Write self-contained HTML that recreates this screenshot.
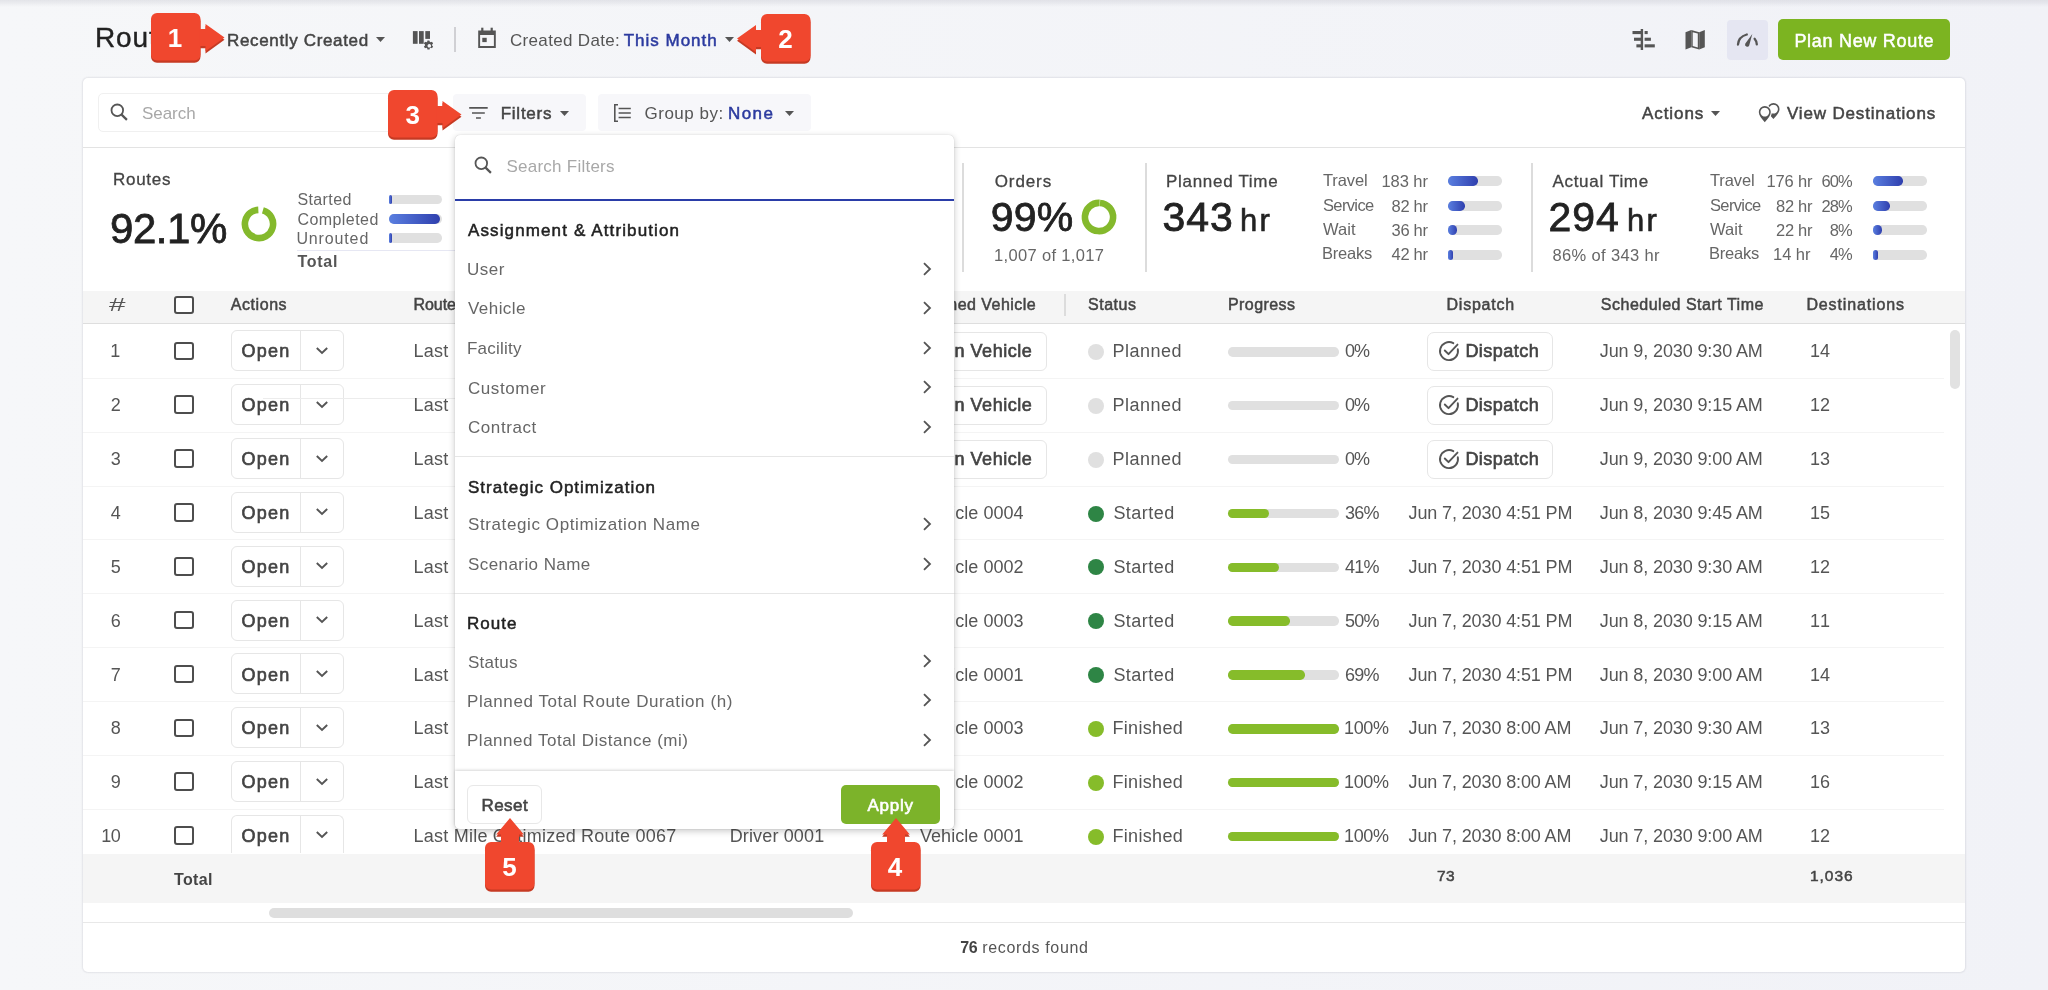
<!DOCTYPE html><html lang="en"><head><meta charset="utf-8"><title>Routes</title><style>
*{box-sizing:border-box;margin:0;padding:0}
html,body{width:2048px;height:990px;overflow:hidden}
body{position:relative;background:linear-gradient(90deg,#f6f7f9,#f1f2f7);font-family:"Liberation Sans", sans-serif;}
div,span.t,svg{position:absolute}
.t{white-space:pre;line-height:1}
.L{position:absolute;left:0;top:0;width:2048px;height:990px;will-change:transform}
</style></head><body>
<div class="L">
<div style="left:0px;top:0px;width:2048px;height:7px;background:linear-gradient(rgba(40,40,70,.09),rgba(40,40,70,0));"></div>
<svg style="left:376.2px;top:36.7px" width="9" height="5" viewBox="0 0 9 5"><path d="M0 0H9L4.5 5Z" fill="#555"/></svg>
<svg style="left:410px;top:28px" width="28" height="26" viewBox="0 0 28 26"><g fill="#555">
<rect x="2.9" y="3.1" width="4.7" height="12.7"/><rect x="9" y="3.1" width="4.7" height="12.7"/><rect x="15.3" y="3.1" width="4.7" height="7.8"/>
<path d="M19.3 12.5l.5 1.3c.3.1.6.2.9.4l1.3-.5 1.1 1.9-1 .9c0 .3 0 .7 0 1l1 .9-1.1 1.9-1.3-.5c-.3.2-.6.3-.9.4l-.2 1.4h-2.200l-.2-1.400c-.3-.1-.6-.2-.9-.4l-1.300.5-1.100-1.900 1.100-.9c0-.3 0-.7 0-1l-1.100-.9 1.100-1.900 1.300.5c.3-.2.600-.300.900-.400l.2-1.300zM19.300 16a1.800 1.800 0 1 0 .01 0z" fill-rule="evenodd"/>
</g></svg>
<div style="left:454px;top:27px;width:2px;height:25px;background:#d0d0d4;"></div>
<svg style="left:476px;top:26px" width="22" height="24" viewBox="0 0 22 24"><g fill="#555">
<path d="M2.200 4.500h17.600v17.500h-17.600zM4.100 9.100v11h13.800v-11z" fill-rule="evenodd"/>
<rect x="5.200" y="1.700" width="2.200" height="4"/><rect x="14.600" y="1.700" width="2.200" height="4"/>
<rect x="6.300" y="11.800" width="4.400" height="4.300"/></g></svg>
<svg style="left:724.5px;top:36.7px" width="9" height="5" viewBox="0 0 9 5"><path d="M0 0H9L4.5 5Z" fill="#555"/></svg>
<svg style="left:1630px;top:27px" width="28" height="26" viewBox="0 0 28 26"><g fill="#555">
<rect x="10.700" y="2" width="2.400" height="21"/>
<rect x="2.500" y="4" width="8.500" height="3.100"/><rect x="14.600" y="4" width="3.100" height="3.100"/>
<rect x="4" y="10.700" width="7" height="3.100"/><rect x="14.600" y="10.700" width="6.300" height="3.100"/>
<rect x="6.400" y="17.300" width="4.600" height="3.100"/><rect x="14.600" y="17.300" width="10.200" height="3.100"/></g></svg>
<svg style="left:1684px;top:28px" width="22" height="24" viewBox="0 0 22 24"><g fill="#555">
<path d="M1.500 4.200L7.300 2v17.200l-5.800 2.200z"/><path d="M15.200 4.200l5.600-2.200v17.200l-5.600 2.200z"/>
<path d="M7.300 2l7.900 2.200v17.200l-7.900-2.200zM8.700 4.200v13.900l5.100 1.400V5.600z" fill-rule="evenodd"/></g></svg>
<div style="left:1727.4px;top:19.5px;width:40.5px;height:40.7px;background:#e5e6f2;border-radius:4px;"></div>
<svg style="left:1734px;top:30px" width="28" height="20" viewBox="0 0 28 20"><g fill="none" stroke="#555" stroke-width="2.300" stroke-linecap="round">
<path d="M4 14.500c.3-4.500 3.500-8.500 8.800-10"/><path d="M20.600 8.800c1.300 1.500 2 3.400 2.200 5.500"/></g>
<path d="M18.300 4L15.200 15.400A2.100 2.100 0 0 1 11.200 13.800Z" fill="#555"/></svg>
<div style="left:1778.3px;top:19.3px;width:171.7px;height:41px;background:#7cb421;border-radius:5px;"></div>
<div style="left:83.2px;top:78.3px;width:1881.5px;height:893.7px;background:#fff;border-radius:5px;box-shadow:0 0 1.500px 1px rgba(30,30,60,.085);"></div>
<div style="left:97.8px;top:93px;width:332px;height:39.3px;border:1px solid #f0f0f0;border-radius:5px;background:#fff;"></div>
<svg style="left:109.4px;top:102.2px" width="20.0" height="20.0" viewBox="0 0 20 20"><circle cx="8.300" cy="8.300" r="5.800" fill="none" stroke="#555" stroke-width="1.800"/><path d="M12.600 12.600l5.300 5.300" stroke="#555" stroke-width="2.200" stroke-linecap="butt"/></svg>
<div style="left:453px;top:94.4px;width:133px;height:36.8px;background:#f7f7fa;border-radius:4px;"></div>
<div style="left:597.5px;top:94.4px;width:213.5px;height:36.8px;background:#f7f7fa;border-radius:4px;"></div>
<svg style="left:467px;top:104px" width="24" height="18" viewBox="0 0 24 18"><g stroke="#555" stroke-width="1.700" fill="none">
<path d="M2.200 3.800h18.500M5 9h12.800M9 14h4.900"/></g></svg>
<svg style="left:559.7px;top:111.0px" width="9" height="5" viewBox="0 0 9 5"><path d="M0 0H9L4.5 5Z" fill="#555"/></svg>
<svg style="left:612px;top:102px" width="22" height="22" viewBox="0 0 22 22"><g stroke="#555" stroke-width="1.600" fill="none">
<path d="M6 2.800H2.800v16.400H6"/><path d="M6.600 6.500h12.200M6.600 11h12.200M6.600 15.500h12.200"/></g></svg>
<svg style="left:785.0px;top:111.0px" width="9" height="5" viewBox="0 0 9 5"><path d="M0 0H9L4.5 5Z" fill="#555"/></svg>
<svg style="left:1710.8px;top:111.0px" width="9" height="5" viewBox="0 0 9 5"><path d="M0 0H9L4.5 5Z" fill="#555"/></svg>
<svg style="left:1757px;top:101px" width="24" height="24" viewBox="0 0 24 24"><defs><mask id="pm"><rect width="24" height="24" fill="#fff"/><path d="M7.800 21.200C4.500 17.500 1.800 14.600 1.800 11a6 6 0 0 1 12 0c0 3.600-2.700 6.500-6 10.200z" fill="#000" stroke="#000" stroke-width="2.400"/></mask></defs>
<g fill="#555" fill-rule="evenodd"><path d="M7.800 21.200C4.500 17.500 1.800 14.600 1.800 11a6 6 0 0 1 12 0c0 3.600-2.700 6.500-6 10.200zM7.800 6.700a4.400 4.400 0 1 0 .01 0z"/>
<path mask="url(#pm)" d="M16.400 18C13.200 14.400 10.500 11.500 10.500 8a6 6 0 0 1 12 0c0 3.500-2.800 6.400-6.100 10zM16.500 3.700a4.400 4.400 0 1 0 .01 0z"/></g></svg>
<div style="left:83px;top:147px;width:1882px;height:1px;background:#e3e3e3;"></div>
<svg style="left:241.3px;top:206.3px" width="36" height="36" viewBox="0 0 36 36"><circle cx="18" cy="18" r="14.1" fill="none" stroke="#84b92c" stroke-width="6.600" stroke-dasharray="83.42 88.59" transform="rotate(-74 18 18)"/></svg>
<div style="left:388.8px;top:194.55px;width:53.5px;height:9.5px;background:#e0e0e0;border-radius:4.75px;"></div>
<div style="left:388.8px;top:194.55px;width:3px;height:9.5px;background:linear-gradient(90deg,#5a7fe0,#2f3fae);border-radius:1.5px;"></div>
<div style="left:388.8px;top:214.1px;width:53.5px;height:9.8px;background:#e0e0e0;border-radius:4.9px;"></div>
<div style="left:388.8px;top:214.1px;width:51.5px;height:9.8px;background:linear-gradient(90deg,#5a7fe0,#2f3fae);border-radius:4.9px;"></div>
<div style="left:388.8px;top:233.15px;width:53.5px;height:9.5px;background:#e0e0e0;border-radius:4.75px;"></div>
<div style="left:388.8px;top:233.15px;width:3px;height:9.5px;background:linear-gradient(90deg,#5a7fe0,#2f3fae);border-radius:1.5px;"></div>
<div style="left:297px;top:250.3px;width:170px;height:1px;background:#e6e7f3;"></div>
<div style="left:962.25px;top:163px;width:1.5px;height:109px;background:#dcdcdc;"></div>
<div style="left:1145.25px;top:163px;width:1.5px;height:109px;background:#dcdcdc;"></div>
<div style="left:1531.25px;top:163px;width:1.5px;height:109px;background:#dcdcdc;"></div>
<svg style="left:1081.2px;top:199px" width="36" height="36" viewBox="0 0 36 36"><circle cx="18" cy="18" r="14.1" fill="none" stroke="#84b92c" stroke-width="6.600" stroke-dasharray="87.61 88.59" transform="rotate(-86 18 18)"/></svg>
<div style="left:1447.9px;top:176.25px;width:53.7px;height:9.5px;background:#e0e0e0;border-radius:4.75px;"></div>
<div style="left:1447.9px;top:176.25px;width:30px;height:9.5px;background:linear-gradient(90deg,#5a7fe0,#2f3fae);border-radius:4.75px;"></div>
<div style="left:1447.9px;top:201.25px;width:53.7px;height:9.5px;background:#e0e0e0;border-radius:4.75px;"></div>
<div style="left:1447.9px;top:201.25px;width:17px;height:9.5px;background:linear-gradient(90deg,#5a7fe0,#2f3fae);border-radius:4.75px;"></div>
<div style="left:1447.9px;top:225.25px;width:53.7px;height:9.5px;background:#e0e0e0;border-radius:4.75px;"></div>
<div style="left:1447.9px;top:225.25px;width:9px;height:9.5px;background:linear-gradient(90deg,#5a7fe0,#2f3fae);border-radius:4.5px;"></div>
<div style="left:1447.9px;top:250.25px;width:53.7px;height:9.5px;background:#e0e0e0;border-radius:4.75px;"></div>
<div style="left:1447.9px;top:250.25px;width:5px;height:9.5px;background:linear-gradient(90deg,#5a7fe0,#2f3fae);border-radius:2.5px;"></div>
<div style="left:1872.8px;top:176.25px;width:54px;height:9.5px;background:#e0e0e0;border-radius:4.75px;"></div>
<div style="left:1872.8px;top:176.25px;width:30px;height:9.5px;background:linear-gradient(90deg,#5a7fe0,#2f3fae);border-radius:4.75px;"></div>
<div style="left:1872.8px;top:201.25px;width:54px;height:9.5px;background:#e0e0e0;border-radius:4.75px;"></div>
<div style="left:1872.8px;top:201.25px;width:17px;height:9.5px;background:linear-gradient(90deg,#5a7fe0,#2f3fae);border-radius:4.75px;"></div>
<div style="left:1872.8px;top:225.25px;width:54px;height:9.5px;background:#e0e0e0;border-radius:4.75px;"></div>
<div style="left:1872.8px;top:225.25px;width:9px;height:9.5px;background:linear-gradient(90deg,#5a7fe0,#2f3fae);border-radius:4.5px;"></div>
<div style="left:1872.8px;top:250.25px;width:54px;height:9.5px;background:#e0e0e0;border-radius:4.75px;"></div>
<div style="left:1872.8px;top:250.25px;width:5.5px;height:9.5px;background:linear-gradient(90deg,#5a7fe0,#2f3fae);border-radius:2.75px;"></div>
<div style="left:83px;top:290.5px;width:1882px;height:32.5px;background:#f5f5f5;"></div>
<div style="left:83px;top:323px;width:1882px;height:1px;background:#dedede;"></div>
<div style="left:173.8px;top:295.6px;width:20px;height:18.5px;border:2px solid #4d4d4d;border-radius:3px;background:#fff;"></div>
<div style="left:1064px;top:294px;width:2px;height:21.5px;background:#dcdcdc;"></div>
<div style="left:173.8px;top:341.6px;width:20px;height:18.5px;border:2px solid #4d4d4d;border-radius:3px;background:#fff;"></div>
<div style="left:230.8px;top:330.3px;width:113px;height:41px;border:1px solid #e6e6e6;border-radius:6px;background:#fff;"><div style="left:68.500px;top:0;width:1px;height:100%;background:#e6e6e6;"></div></div>
<svg style="left:314.700px;top:345.80px" width="14" height="10" viewBox="0 0 14 10"><path d="M1.800 2l5.200 5 5.200-5" fill="none" stroke="#555" stroke-width="1.900"/></svg>
<div style="left:891px;top:332.4px;width:155.6px;height:38.8px;border:1px solid #e6e6e6;border-radius:6px;background:#fff;"></div>
<div style="left:1087.8px;top:344.0px;width:16px;height:16px;background:#e0e0e0;border-radius:50%;"></div>
<div style="left:1228.2px;top:347.1px;width:110.6px;height:9.5px;background:#e0e0e0;border-radius:4.750px;"></div>
<div style="left:1427.3px;top:332.4px;width:125.8px;height:38.8px;border:1px solid #e6e6e6;border-radius:7px;background:#fff;"></div>
<svg style="left:1437.800px;top:340.0px" width="22" height="22" viewBox="0 0 22 22"><g fill="none" stroke="#555" stroke-width="1.900" stroke-linecap="round" stroke-linejoin="round"><path d="M19.800 9.200a9 9 0 1 1-4.500-6"/><path d="M6.800 10.500l3.700 3.700 9-9.600"/></g></svg>
<div style="left:83px;top:377.85px;width:1861px;height:1px;background:#f4f4f4;"></div>
<div style="left:173.8px;top:395.45000000000005px;width:20px;height:18.5px;border:2px solid #4d4d4d;border-radius:3px;background:#fff;"></div>
<div style="left:230.8px;top:384.15000000000003px;width:113px;height:41px;border:1px solid #e6e6e6;border-radius:6px;background:#fff;"><div style="left:68.500px;top:0;width:1px;height:100%;background:#e6e6e6;"></div></div>
<svg style="left:314.700px;top:399.65px" width="14" height="10" viewBox="0 0 14 10"><path d="M1.800 2l5.200 5 5.200-5" fill="none" stroke="#555" stroke-width="1.900"/></svg>
<div style="left:891px;top:386.25px;width:155.6px;height:38.8px;border:1px solid #e6e6e6;border-radius:6px;background:#fff;"></div>
<div style="left:1087.8px;top:397.85px;width:16px;height:16px;background:#e0e0e0;border-radius:50%;"></div>
<div style="left:1228.2px;top:400.95000000000005px;width:110.6px;height:9.5px;background:#e0e0e0;border-radius:4.750px;"></div>
<div style="left:1427.3px;top:386.25px;width:125.8px;height:38.8px;border:1px solid #e6e6e6;border-radius:7px;background:#fff;"></div>
<svg style="left:1437.800px;top:393.85px" width="22" height="22" viewBox="0 0 22 22"><g fill="none" stroke="#555" stroke-width="1.900" stroke-linecap="round" stroke-linejoin="round"><path d="M19.800 9.200a9 9 0 1 1-4.500-6"/><path d="M6.800 10.500l3.700 3.700 9-9.600"/></g></svg>
<div style="left:83px;top:431.7px;width:1861px;height:1px;background:#f4f4f4;"></div>
<div style="left:173.8px;top:449.3px;width:20px;height:18.5px;border:2px solid #4d4d4d;border-radius:3px;background:#fff;"></div>
<div style="left:230.8px;top:438.0px;width:113px;height:41px;border:1px solid #e6e6e6;border-radius:6px;background:#fff;"><div style="left:68.500px;top:0;width:1px;height:100%;background:#e6e6e6;"></div></div>
<svg style="left:314.700px;top:453.50px" width="14" height="10" viewBox="0 0 14 10"><path d="M1.800 2l5.200 5 5.200-5" fill="none" stroke="#555" stroke-width="1.900"/></svg>
<div style="left:891px;top:440.09999999999997px;width:155.6px;height:38.8px;border:1px solid #e6e6e6;border-radius:6px;background:#fff;"></div>
<div style="left:1087.8px;top:451.7px;width:16px;height:16px;background:#e0e0e0;border-radius:50%;"></div>
<div style="left:1228.2px;top:454.8px;width:110.6px;height:9.5px;background:#e0e0e0;border-radius:4.750px;"></div>
<div style="left:1427.3px;top:440.09999999999997px;width:125.8px;height:38.8px;border:1px solid #e6e6e6;border-radius:7px;background:#fff;"></div>
<svg style="left:1437.800px;top:447.7px" width="22" height="22" viewBox="0 0 22 22"><g fill="none" stroke="#555" stroke-width="1.900" stroke-linecap="round" stroke-linejoin="round"><path d="M19.800 9.200a9 9 0 1 1-4.500-6"/><path d="M6.800 10.500l3.700 3.700 9-9.600"/></g></svg>
<div style="left:83px;top:485.55px;width:1861px;height:1px;background:#f4f4f4;"></div>
<div style="left:173.8px;top:503.15000000000003px;width:20px;height:18.5px;border:2px solid #4d4d4d;border-radius:3px;background:#fff;"></div>
<div style="left:230.8px;top:491.85px;width:113px;height:41px;border:1px solid #e6e6e6;border-radius:6px;background:#fff;"><div style="left:68.500px;top:0;width:1px;height:100%;background:#e6e6e6;"></div></div>
<svg style="left:314.700px;top:507.35px" width="14" height="10" viewBox="0 0 14 10"><path d="M1.800 2l5.200 5 5.200-5" fill="none" stroke="#555" stroke-width="1.900"/></svg>
<div style="left:1087.8px;top:505.55px;width:16px;height:16px;background:#2e8545;border-radius:50%;"></div>
<div style="left:1228.2px;top:508.65000000000003px;width:110.6px;height:9.5px;background:#e0e0e0;border-radius:4.750px;"></div>
<div style="left:1228.2px;top:508.65000000000003px;width:40.4px;height:9.5px;background:#86bc2a;border-radius:4.750px;"></div>
<div style="left:83px;top:539.4px;width:1861px;height:1px;background:#f4f4f4;"></div>
<div style="left:173.8px;top:557.0px;width:20px;height:18.5px;border:2px solid #4d4d4d;border-radius:3px;background:#fff;"></div>
<div style="left:230.8px;top:545.7px;width:113px;height:41px;border:1px solid #e6e6e6;border-radius:6px;background:#fff;"><div style="left:68.500px;top:0;width:1px;height:100%;background:#e6e6e6;"></div></div>
<svg style="left:314.700px;top:561.20px" width="14" height="10" viewBox="0 0 14 10"><path d="M1.800 2l5.200 5 5.200-5" fill="none" stroke="#555" stroke-width="1.900"/></svg>
<div style="left:1087.8px;top:559.4px;width:16px;height:16px;background:#2e8545;border-radius:50%;"></div>
<div style="left:1228.2px;top:562.5px;width:110.6px;height:9.5px;background:#e0e0e0;border-radius:4.750px;"></div>
<div style="left:1228.2px;top:562.5px;width:50.5px;height:9.5px;background:#86bc2a;border-radius:4.750px;"></div>
<div style="left:83px;top:593.25px;width:1861px;height:1px;background:#f4f4f4;"></div>
<div style="left:173.8px;top:610.85px;width:20px;height:18.5px;border:2px solid #4d4d4d;border-radius:3px;background:#fff;"></div>
<div style="left:230.8px;top:599.55px;width:113px;height:41px;border:1px solid #e6e6e6;border-radius:6px;background:#fff;"><div style="left:68.500px;top:0;width:1px;height:100%;background:#e6e6e6;"></div></div>
<svg style="left:314.700px;top:615.05px" width="14" height="10" viewBox="0 0 14 10"><path d="M1.800 2l5.200 5 5.200-5" fill="none" stroke="#555" stroke-width="1.900"/></svg>
<div style="left:1087.8px;top:613.25px;width:16px;height:16px;background:#2e8545;border-radius:50%;"></div>
<div style="left:1228.2px;top:616.35px;width:110.6px;height:9.5px;background:#e0e0e0;border-radius:4.750px;"></div>
<div style="left:1228.2px;top:616.35px;width:61.6px;height:9.5px;background:#86bc2a;border-radius:4.750px;"></div>
<div style="left:83px;top:647.1px;width:1861px;height:1px;background:#f4f4f4;"></div>
<div style="left:173.8px;top:664.7px;width:20px;height:18.5px;border:2px solid #4d4d4d;border-radius:3px;background:#fff;"></div>
<div style="left:230.8px;top:653.4000000000001px;width:113px;height:41px;border:1px solid #e6e6e6;border-radius:6px;background:#fff;"><div style="left:68.500px;top:0;width:1px;height:100%;background:#e6e6e6;"></div></div>
<svg style="left:314.700px;top:668.90px" width="14" height="10" viewBox="0 0 14 10"><path d="M1.800 2l5.200 5 5.200-5" fill="none" stroke="#555" stroke-width="1.900"/></svg>
<div style="left:1087.8px;top:667.1px;width:16px;height:16px;background:#2e8545;border-radius:50%;"></div>
<div style="left:1228.2px;top:670.2px;width:110.6px;height:9.5px;background:#e0e0e0;border-radius:4.750px;"></div>
<div style="left:1228.2px;top:670.2px;width:77.2px;height:9.5px;background:#86bc2a;border-radius:4.750px;"></div>
<div style="left:83px;top:700.95px;width:1861px;height:1px;background:#f4f4f4;"></div>
<div style="left:173.8px;top:718.55px;width:20px;height:18.5px;border:2px solid #4d4d4d;border-radius:3px;background:#fff;"></div>
<div style="left:230.8px;top:707.25px;width:113px;height:41px;border:1px solid #e6e6e6;border-radius:6px;background:#fff;"><div style="left:68.500px;top:0;width:1px;height:100%;background:#e6e6e6;"></div></div>
<svg style="left:314.700px;top:722.75px" width="14" height="10" viewBox="0 0 14 10"><path d="M1.800 2l5.200 5 5.200-5" fill="none" stroke="#555" stroke-width="1.900"/></svg>
<div style="left:1087.8px;top:720.95px;width:16px;height:16px;background:#86bc2a;border-radius:50%;"></div>
<div style="left:1228.2px;top:724.05px;width:110.6px;height:9.5px;background:#e0e0e0;border-radius:4.750px;"></div>
<div style="left:1228.2px;top:724.05px;width:110.6px;height:9.5px;background:#86bc2a;border-radius:4.750px;"></div>
<div style="left:83px;top:754.8px;width:1861px;height:1px;background:#f4f4f4;"></div>
<div style="left:173.8px;top:772.4000000000001px;width:20px;height:18.5px;border:2px solid #4d4d4d;border-radius:3px;background:#fff;"></div>
<div style="left:230.8px;top:761.1px;width:113px;height:41px;border:1px solid #e6e6e6;border-radius:6px;background:#fff;"><div style="left:68.500px;top:0;width:1px;height:100%;background:#e6e6e6;"></div></div>
<svg style="left:314.700px;top:776.60px" width="14" height="10" viewBox="0 0 14 10"><path d="M1.800 2l5.200 5 5.200-5" fill="none" stroke="#555" stroke-width="1.900"/></svg>
<div style="left:1087.8px;top:774.8px;width:16px;height:16px;background:#86bc2a;border-radius:50%;"></div>
<div style="left:1228.2px;top:777.9000000000001px;width:110.6px;height:9.5px;background:#e0e0e0;border-radius:4.750px;"></div>
<div style="left:1228.2px;top:777.9000000000001px;width:110.6px;height:9.5px;background:#86bc2a;border-radius:4.750px;"></div>
<div style="left:83px;top:808.6500000000001px;width:1861px;height:1px;background:#f4f4f4;"></div>
<div style="left:173.8px;top:826.25px;width:20px;height:18.5px;border:2px solid #4d4d4d;border-radius:3px;background:#fff;"></div>
<div style="left:230.8px;top:814.95px;width:113px;height:38px;border:1px solid #e6e6e6;border-bottom:none;border-radius:6px 6px 0 0;background:#fff;"><div style="left:68.500px;top:0;width:1px;height:100%;background:#e6e6e6;"></div></div>
<svg style="left:314.700px;top:830.45px" width="14" height="10" viewBox="0 0 14 10"><path d="M1.800 2l5.200 5 5.200-5" fill="none" stroke="#555" stroke-width="1.900"/></svg>
<div style="left:1087.8px;top:828.6500000000001px;width:16px;height:16px;background:#86bc2a;border-radius:50%;"></div>
<div style="left:1228.2px;top:831.75px;width:110.6px;height:9.5px;background:#e0e0e0;border-radius:4.750px;"></div>
<div style="left:1228.2px;top:831.75px;width:110.6px;height:9.5px;background:#86bc2a;border-radius:4.750px;"></div>
<div style="left:263px;top:398px;width:192px;height:1px;background:#ececec;"></div>
<div style="left:1950px;top:329.5px;width:9.5px;height:59px;background:#e2e2e2;border-radius:5px;"></div>
<div style="left:83px;top:853.8px;width:1882px;height:49px;background:#f5f5f5;"></div>
<div style="left:269.2px;top:908.4px;width:584px;height:9.6px;background:#dedede;border-radius:5px;"></div>
<div style="left:83px;top:922px;width:1882px;height:1px;background:#e8e8e8;"></div>
<span class="t" style="left:95.00px;top:24px;font-size:28px;color:#222;letter-spacing:0.857px;-webkit-text-stroke:0.4px #222;">Routes</span>
<span class="t" style="left:227.00px;top:32px;font-size:17px;color:#444;letter-spacing:0.654px;-webkit-text-stroke:0.5px #444;">Recently Created</span>
<span class="t" style="left:510.00px;top:32px;font-size:17px;color:#555;letter-spacing:0.324px;">Created Date:</span>
<span class="t" style="left:623.70px;top:32px;font-size:17px;color:#2b3a9f;letter-spacing:0.996px;-webkit-text-stroke:0.5px #2b3a9f;">This Month</span>
<span class="t" style="left:1794.40px;top:32px;font-size:18px;color:#fff;letter-spacing:0.703px;-webkit-text-stroke:0.5px #fff;">Plan New Route</span>
<span class="t" style="left:142.00px;top:105px;font-size:17px;color:#a8a8a8;letter-spacing:-0.042px;">Search</span>
<span class="t" style="left:500.70px;top:105px;font-size:17px;color:#444;letter-spacing:0.754px;-webkit-text-stroke:0.5px #444;">Filters</span>
<span class="t" style="left:644.50px;top:105px;font-size:17px;color:#555;letter-spacing:0.509px;">Group by:</span>
<span class="t" style="left:728.00px;top:105px;font-size:17px;color:#2b3a9f;letter-spacing:1.405px;-webkit-text-stroke:0.5px #2b3a9f;">None</span>
<span class="t" style="left:1642.00px;top:105px;font-size:17px;color:#444;letter-spacing:0.925px;-webkit-text-stroke:0.5px #444;">Actions</span>
<span class="t" style="left:1787.00px;top:105px;font-size:17px;color:#444;letter-spacing:0.837px;-webkit-text-stroke:0.5px #444;">View Destinations</span>
<span class="t" style="left:113.00px;top:171px;font-size:17px;color:#444;letter-spacing:0.727px;-webkit-text-stroke:0.3px #444;">Routes</span>
<span class="t" style="left:110.00px;top:208px;font-size:42px;color:#222;letter-spacing:-0.436px;-webkit-text-stroke:0.8px #222;">92.1%</span>
<span class="t" style="left:297.40px;top:192px;font-size:16px;color:#666;letter-spacing:0.402px;">Started</span>
<span class="t" style="left:297.40px;top:212px;font-size:16px;color:#666;letter-spacing:0.440px;">Completed</span>
<span class="t" style="left:296.40px;top:231px;font-size:16px;color:#666;letter-spacing:0.868px;">Unrouted</span>
<span class="t" style="left:297.40px;top:254px;font-size:16px;color:#555;font-weight:700;letter-spacing:0.754px;">Total</span>
<span class="t" style="left:994.70px;top:173px;font-size:17px;color:#444;letter-spacing:0.909px;-webkit-text-stroke:0.3px #444;">Orders</span>
<span class="t" style="left:990.80px;top:197px;font-size:41px;color:#222;letter-spacing:0.198px;-webkit-text-stroke:0.8px #222;">99%</span>
<span class="t" style="left:994.00px;top:247px;font-size:16.5px;color:#666;letter-spacing:0.336px;">1,007 of 1,017</span>
<span class="t" style="left:1166.00px;top:173px;font-size:17px;color:#444;letter-spacing:0.700px;-webkit-text-stroke:0.3px #444;">Planned Time</span>
<span class="t" style="left:1162.60px;top:197px;font-size:41px;color:#222;letter-spacing:0.898px;-webkit-text-stroke:0.8px #222;">343</span>
<span class="t" style="left:1240.00px;top:205px;font-size:31px;color:#222;letter-spacing:2.200px;-webkit-text-stroke:0.6px #222;">hr</span>
<span class="t" style="left:1323.00px;top:172px;font-size:16.5px;color:#666;letter-spacing:-0.113px;">Travel</span>
<span class="t" style="left:1381.40px;top:173px;font-size:16.5px;color:#666;letter-spacing:-0.038px;">183 hr</span>
<span class="t" style="left:1323.00px;top:197px;font-size:16.5px;color:#666;letter-spacing:-0.640px;">Service</span>
<span class="t" style="left:1391.50px;top:198px;font-size:16.5px;color:#666;letter-spacing:-0.278px;">82 hr</span>
<span class="t" style="left:1323.00px;top:221px;font-size:16.5px;color:#666;letter-spacing:0.066px;">Wait</span>
<span class="t" style="left:1391.50px;top:222px;font-size:16.5px;color:#666;letter-spacing:-0.278px;">36 hr</span>
<span class="t" style="left:1322.00px;top:245px;font-size:16.5px;color:#666;letter-spacing:-0.221px;">Breaks</span>
<span class="t" style="left:1391.50px;top:246px;font-size:16.5px;color:#666;letter-spacing:-0.278px;">42 hr</span>
<span class="t" style="left:1552.50px;top:173px;font-size:17px;color:#444;letter-spacing:0.684px;-webkit-text-stroke:0.3px #444;">Actual Time</span>
<span class="t" style="left:1548.60px;top:197px;font-size:41px;color:#222;letter-spacing:0.898px;-webkit-text-stroke:0.8px #222;">294</span>
<span class="t" style="left:1627.00px;top:205px;font-size:31px;color:#222;letter-spacing:2.200px;-webkit-text-stroke:0.6px #222;">hr</span>
<span class="t" style="left:1552.50px;top:247px;font-size:16.5px;color:#666;letter-spacing:0.355px;">86% of 343 hr</span>
<span class="t" style="left:1710.00px;top:172px;font-size:16.5px;color:#666;letter-spacing:-0.113px;">Travel</span>
<span class="t" style="left:1766.40px;top:173px;font-size:16.5px;color:#666;letter-spacing:-0.138px;">176 hr</span>
<span class="t" style="left:1821.45px;top:173px;font-size:16.5px;color:#666;letter-spacing:-0.900px;">60%</span>
<span class="t" style="left:1710.00px;top:197px;font-size:16.5px;color:#666;letter-spacing:-0.640px;">Service</span>
<span class="t" style="left:1776.00px;top:198px;font-size:16.5px;color:#666;letter-spacing:-0.278px;">82 hr</span>
<span class="t" style="left:1821.45px;top:198px;font-size:16.5px;color:#666;letter-spacing:-0.900px;">28%</span>
<span class="t" style="left:1710.00px;top:221px;font-size:16.5px;color:#666;letter-spacing:0.066px;">Wait</span>
<span class="t" style="left:1776.00px;top:222px;font-size:16.5px;color:#666;letter-spacing:-0.278px;">22 hr</span>
<span class="t" style="left:1829.72px;top:222px;font-size:16.5px;color:#666;letter-spacing:-0.900px;">8%</span>
<span class="t" style="left:1709.00px;top:245px;font-size:16.5px;color:#666;letter-spacing:-0.221px;">Breaks</span>
<span class="t" style="left:1773.00px;top:246px;font-size:16.5px;color:#666;letter-spacing:-0.028px;">14 hr</span>
<span class="t" style="left:1829.72px;top:246px;font-size:16.5px;color:#666;letter-spacing:-0.900px;">4%</span>
<span class="t" style="left:108.50px;top:296px;font-size:18px;color:#555;transform:scaleX(1.650);transform-origin:0.00px 50%;">#</span>
<span class="t" style="left:230.80px;top:297px;font-size:16px;color:#444;letter-spacing:0.555px;-webkit-text-stroke:0.5px #444;">Actions</span>
<span class="t" style="left:413.60px;top:297px;font-size:16px;color:#444;letter-spacing:-0.102px;-webkit-text-stroke:0.5px #444;">Route Name</span>
<span class="t" style="left:731.00px;top:297px;font-size:16px;color:#444;letter-spacing:0.023px;-webkit-text-stroke:0.5px #444;">Assigned User</span>
<span class="t" style="left:907.00px;top:297px;font-size:16px;color:#444;letter-spacing:0.449px;-webkit-text-stroke:0.5px #444;">Assigned Vehicle</span>
<span class="t" style="left:1088.00px;top:297px;font-size:16px;color:#444;letter-spacing:0.528px;-webkit-text-stroke:0.5px #444;">Status</span>
<span class="t" style="left:1228.00px;top:297px;font-size:16px;color:#444;letter-spacing:0.425px;-webkit-text-stroke:0.5px #444;">Progress</span>
<span class="t" style="left:1446.50px;top:297px;font-size:16px;color:#444;letter-spacing:0.778px;-webkit-text-stroke:0.5px #444;">Dispatch</span>
<span class="t" style="left:1600.80px;top:297px;font-size:16px;color:#444;letter-spacing:0.507px;-webkit-text-stroke:0.5px #444;">Scheduled Start Time</span>
<span class="t" style="left:1806.40px;top:297px;font-size:16px;color:#444;letter-spacing:0.868px;-webkit-text-stroke:0.5px #444;">Destinations</span>
<span class="t" style="left:110.30px;top:342px;font-size:18px;color:#555;">1</span>
<span class="t" style="left:241.60px;top:342px;font-size:18px;color:#444;letter-spacing:1.193px;-webkit-text-stroke:0.65px #444;">Open</span>
<span class="t" style="left:413.60px;top:342px;font-size:18px;color:#555;letter-spacing:0.223px;">Last Mile Optimized Route 0076</span>
<span class="t" style="left:729.70px;top:342px;font-size:18px;color:#555;letter-spacing:0.147px;">Driver 0003</span>
<span class="t" style="left:907.80px;top:342px;font-size:18px;color:#444;letter-spacing:0.534px;-webkit-text-stroke:0.65px #444;">Assign Vehicle</span>
<span class="t" style="left:1112.40px;top:342px;font-size:18px;color:#555;letter-spacing:0.525px;">Planned</span>
<span class="t" style="left:1345.00px;top:342px;font-size:18px;color:#555;letter-spacing:-0.900px;">0%</span>
<span class="t" style="left:1465.40px;top:342px;font-size:18px;color:#444;letter-spacing:0.468px;-webkit-text-stroke:0.65px #444;">Dispatch</span>
<span class="t" style="left:1599.80px;top:342px;font-size:18px;color:#555;letter-spacing:-0.118px;">Jun 9, 2030 9:30 AM</span>
<span class="t" style="left:1810.00px;top:342px;font-size:18px;color:#555;letter-spacing:-0.011px;">14</span>
<span class="t" style="left:110.80px;top:396px;font-size:18px;color:#555;">2</span>
<span class="t" style="left:241.60px;top:396px;font-size:18px;color:#444;letter-spacing:1.193px;-webkit-text-stroke:0.65px #444;">Open</span>
<span class="t" style="left:413.60px;top:396px;font-size:18px;color:#555;letter-spacing:0.223px;">Last Mile Optimized Route 0075</span>
<span class="t" style="left:729.70px;top:396px;font-size:18px;color:#555;letter-spacing:0.147px;">Driver 0002</span>
<span class="t" style="left:907.80px;top:396px;font-size:18px;color:#444;letter-spacing:0.534px;-webkit-text-stroke:0.65px #444;">Assign Vehicle</span>
<span class="t" style="left:1112.40px;top:396px;font-size:18px;color:#555;letter-spacing:0.525px;">Planned</span>
<span class="t" style="left:1345.00px;top:396px;font-size:18px;color:#555;letter-spacing:-0.900px;">0%</span>
<span class="t" style="left:1465.40px;top:396px;font-size:18px;color:#444;letter-spacing:0.468px;-webkit-text-stroke:0.65px #444;">Dispatch</span>
<span class="t" style="left:1599.80px;top:396px;font-size:18px;color:#555;letter-spacing:-0.118px;">Jun 9, 2030 9:15 AM</span>
<span class="t" style="left:1810.00px;top:396px;font-size:18px;color:#555;letter-spacing:-0.011px;">12</span>
<span class="t" style="left:110.80px;top:450px;font-size:18px;color:#555;">3</span>
<span class="t" style="left:241.60px;top:450px;font-size:18px;color:#444;letter-spacing:1.193px;-webkit-text-stroke:0.65px #444;">Open</span>
<span class="t" style="left:413.60px;top:450px;font-size:18px;color:#555;letter-spacing:0.223px;">Last Mile Optimized Route 0074</span>
<span class="t" style="left:729.70px;top:450px;font-size:18px;color:#555;letter-spacing:0.147px;">Driver 0001</span>
<span class="t" style="left:907.80px;top:450px;font-size:18px;color:#444;letter-spacing:0.534px;-webkit-text-stroke:0.65px #444;">Assign Vehicle</span>
<span class="t" style="left:1112.40px;top:450px;font-size:18px;color:#555;letter-spacing:0.525px;">Planned</span>
<span class="t" style="left:1345.00px;top:450px;font-size:18px;color:#555;letter-spacing:-0.900px;">0%</span>
<span class="t" style="left:1465.40px;top:450px;font-size:18px;color:#444;letter-spacing:0.468px;-webkit-text-stroke:0.65px #444;">Dispatch</span>
<span class="t" style="left:1599.80px;top:450px;font-size:18px;color:#555;letter-spacing:-0.118px;">Jun 9, 2030 9:00 AM</span>
<span class="t" style="left:1810.00px;top:450px;font-size:18px;color:#555;letter-spacing:-0.011px;">13</span>
<span class="t" style="left:110.80px;top:504px;font-size:18px;color:#555;">4</span>
<span class="t" style="left:241.60px;top:504px;font-size:18px;color:#444;letter-spacing:1.193px;-webkit-text-stroke:0.65px #444;">Open</span>
<span class="t" style="left:413.60px;top:504px;font-size:18px;color:#555;letter-spacing:0.223px;">Last Mile Optimized Route 0073</span>
<span class="t" style="left:729.70px;top:504px;font-size:18px;color:#555;letter-spacing:0.147px;">Driver 0004</span>
<span class="t" style="left:920.00px;top:504px;font-size:18px;color:#555;letter-spacing:0.048px;">Vehicle 0004</span>
<span class="t" style="left:1113.40px;top:504px;font-size:18px;color:#555;letter-spacing:0.463px;">Started</span>
<span class="t" style="left:1345.00px;top:504px;font-size:18px;color:#555;letter-spacing:-0.761px;">36%</span>
<span class="t" style="left:1408.50px;top:504px;font-size:18px;color:#555;letter-spacing:-0.118px;">Jun 7, 2030 4:51 PM</span>
<span class="t" style="left:1599.80px;top:504px;font-size:18px;color:#555;letter-spacing:-0.118px;">Jun 8, 2030 9:45 AM</span>
<span class="t" style="left:1810.00px;top:504px;font-size:18px;color:#555;letter-spacing:-0.011px;">15</span>
<span class="t" style="left:110.80px;top:558px;font-size:18px;color:#555;">5</span>
<span class="t" style="left:241.60px;top:558px;font-size:18px;color:#444;letter-spacing:1.193px;-webkit-text-stroke:0.65px #444;">Open</span>
<span class="t" style="left:413.60px;top:558px;font-size:18px;color:#555;letter-spacing:0.223px;">Last Mile Optimized Route 0072</span>
<span class="t" style="left:729.70px;top:558px;font-size:18px;color:#555;letter-spacing:0.147px;">Driver 0002</span>
<span class="t" style="left:920.00px;top:558px;font-size:18px;color:#555;letter-spacing:0.048px;">Vehicle 0002</span>
<span class="t" style="left:1113.40px;top:558px;font-size:18px;color:#555;letter-spacing:0.463px;">Started</span>
<span class="t" style="left:1345.00px;top:558px;font-size:18px;color:#555;letter-spacing:-0.761px;">41%</span>
<span class="t" style="left:1408.50px;top:558px;font-size:18px;color:#555;letter-spacing:-0.118px;">Jun 7, 2030 4:51 PM</span>
<span class="t" style="left:1599.80px;top:558px;font-size:18px;color:#555;letter-spacing:-0.118px;">Jun 8, 2030 9:30 AM</span>
<span class="t" style="left:1810.00px;top:558px;font-size:18px;color:#555;letter-spacing:-0.011px;">12</span>
<span class="t" style="left:110.80px;top:612px;font-size:18px;color:#555;">6</span>
<span class="t" style="left:241.60px;top:612px;font-size:18px;color:#444;letter-spacing:1.193px;-webkit-text-stroke:0.65px #444;">Open</span>
<span class="t" style="left:413.60px;top:612px;font-size:18px;color:#555;letter-spacing:0.223px;">Last Mile Optimized Route 0071</span>
<span class="t" style="left:729.70px;top:612px;font-size:18px;color:#555;letter-spacing:0.147px;">Driver 0003</span>
<span class="t" style="left:920.00px;top:612px;font-size:18px;color:#555;letter-spacing:0.048px;">Vehicle 0003</span>
<span class="t" style="left:1113.40px;top:612px;font-size:18px;color:#555;letter-spacing:0.463px;">Started</span>
<span class="t" style="left:1345.00px;top:612px;font-size:18px;color:#555;letter-spacing:-0.761px;">50%</span>
<span class="t" style="left:1408.50px;top:612px;font-size:18px;color:#555;letter-spacing:-0.118px;">Jun 7, 2030 4:51 PM</span>
<span class="t" style="left:1599.80px;top:612px;font-size:18px;color:#555;letter-spacing:-0.118px;">Jun 8, 2030 9:15 AM</span>
<span class="t" style="left:1810.00px;top:612px;font-size:18px;color:#555;letter-spacing:1.325px;">11</span>
<span class="t" style="left:110.80px;top:666px;font-size:18px;color:#555;">7</span>
<span class="t" style="left:241.60px;top:666px;font-size:18px;color:#444;letter-spacing:1.193px;-webkit-text-stroke:0.65px #444;">Open</span>
<span class="t" style="left:413.60px;top:666px;font-size:18px;color:#555;letter-spacing:0.223px;">Last Mile Optimized Route 0070</span>
<span class="t" style="left:729.70px;top:666px;font-size:18px;color:#555;letter-spacing:0.147px;">Driver 0001</span>
<span class="t" style="left:920.00px;top:666px;font-size:18px;color:#555;letter-spacing:0.048px;">Vehicle 0001</span>
<span class="t" style="left:1113.40px;top:666px;font-size:18px;color:#555;letter-spacing:0.463px;">Started</span>
<span class="t" style="left:1345.00px;top:666px;font-size:18px;color:#555;letter-spacing:-0.761px;">69%</span>
<span class="t" style="left:1408.50px;top:666px;font-size:18px;color:#555;letter-spacing:-0.118px;">Jun 7, 2030 4:51 PM</span>
<span class="t" style="left:1599.80px;top:666px;font-size:18px;color:#555;letter-spacing:-0.118px;">Jun 8, 2030 9:00 AM</span>
<span class="t" style="left:1810.00px;top:666px;font-size:18px;color:#555;letter-spacing:-0.011px;">14</span>
<span class="t" style="left:110.80px;top:719px;font-size:18px;color:#555;">8</span>
<span class="t" style="left:241.60px;top:719px;font-size:18px;color:#444;letter-spacing:1.193px;-webkit-text-stroke:0.65px #444;">Open</span>
<span class="t" style="left:413.60px;top:719px;font-size:18px;color:#555;letter-spacing:0.223px;">Last Mile Optimized Route 0069</span>
<span class="t" style="left:729.70px;top:719px;font-size:18px;color:#555;letter-spacing:0.147px;">Driver 0003</span>
<span class="t" style="left:920.00px;top:719px;font-size:18px;color:#555;letter-spacing:0.048px;">Vehicle 0003</span>
<span class="t" style="left:1112.40px;top:719px;font-size:18px;color:#555;letter-spacing:0.339px;">Finished</span>
<span class="t" style="left:1344.00px;top:719px;font-size:18px;color:#555;letter-spacing:-0.344px;">100%</span>
<span class="t" style="left:1408.50px;top:719px;font-size:18px;color:#555;letter-spacing:-0.118px;">Jun 7, 2030 8:00 AM</span>
<span class="t" style="left:1599.80px;top:719px;font-size:18px;color:#555;letter-spacing:-0.118px;">Jun 7, 2030 9:30 AM</span>
<span class="t" style="left:1810.00px;top:719px;font-size:18px;color:#555;letter-spacing:-0.011px;">13</span>
<span class="t" style="left:110.80px;top:773px;font-size:18px;color:#555;">9</span>
<span class="t" style="left:241.60px;top:773px;font-size:18px;color:#444;letter-spacing:1.193px;-webkit-text-stroke:0.65px #444;">Open</span>
<span class="t" style="left:413.60px;top:773px;font-size:18px;color:#555;letter-spacing:0.223px;">Last Mile Optimized Route 0068</span>
<span class="t" style="left:729.70px;top:773px;font-size:18px;color:#555;letter-spacing:0.147px;">Driver 0002</span>
<span class="t" style="left:920.00px;top:773px;font-size:18px;color:#555;letter-spacing:0.048px;">Vehicle 0002</span>
<span class="t" style="left:1112.40px;top:773px;font-size:18px;color:#555;letter-spacing:0.339px;">Finished</span>
<span class="t" style="left:1344.00px;top:773px;font-size:18px;color:#555;letter-spacing:-0.344px;">100%</span>
<span class="t" style="left:1408.50px;top:773px;font-size:18px;color:#555;letter-spacing:-0.118px;">Jun 7, 2030 8:00 AM</span>
<span class="t" style="left:1599.80px;top:773px;font-size:18px;color:#555;letter-spacing:-0.118px;">Jun 7, 2030 9:15 AM</span>
<span class="t" style="left:1810.00px;top:773px;font-size:18px;color:#555;letter-spacing:-0.011px;">16</span>
<span class="t" style="left:101.35px;top:827px;font-size:18px;color:#555;letter-spacing:-0.711px;">10</span>
<span class="t" style="left:241.60px;top:827px;font-size:18px;color:#444;letter-spacing:1.193px;-webkit-text-stroke:0.65px #444;">Open</span>
<span class="t" style="left:413.60px;top:827px;font-size:18px;color:#555;letter-spacing:0.223px;">Last Mile Optimized Route 0067</span>
<span class="t" style="left:729.70px;top:827px;font-size:18px;color:#555;letter-spacing:0.147px;">Driver 0001</span>
<span class="t" style="left:920.00px;top:827px;font-size:18px;color:#555;letter-spacing:0.048px;">Vehicle 0001</span>
<span class="t" style="left:1112.40px;top:827px;font-size:18px;color:#555;letter-spacing:0.339px;">Finished</span>
<span class="t" style="left:1344.00px;top:827px;font-size:18px;color:#555;letter-spacing:-0.344px;">100%</span>
<span class="t" style="left:1408.50px;top:827px;font-size:18px;color:#555;letter-spacing:-0.118px;">Jun 7, 2030 8:00 AM</span>
<span class="t" style="left:1599.80px;top:827px;font-size:18px;color:#555;letter-spacing:-0.118px;">Jun 7, 2030 9:00 AM</span>
<span class="t" style="left:1810.00px;top:827px;font-size:18px;color:#555;letter-spacing:-0.011px;">12</span>
<span class="t" style="left:174.00px;top:872px;font-size:16px;color:#444;font-weight:700;letter-spacing:0.354px;">Total</span>
<span class="t" style="left:1437.00px;top:868px;font-size:15.5px;color:#444;letter-spacing:0.380px;-webkit-text-stroke:0.5px #444;">73</span>
<span class="t" style="left:1810.00px;top:868px;font-size:15.5px;color:#444;letter-spacing:0.958px;-webkit-text-stroke:0.5px #444;">1,036</span>
<span class="t" style="left:960.20px;top:940px;font-size:16px;color:#444;font-weight:700;letter-spacing:-0.398px;">76</span>
<span class="t" style="left:982.20px;top:940px;font-size:16px;color:#555;letter-spacing:0.655px;">records found</span>
</div>
<div class="L">
<div style="left:454.700px;top:134.600px;width:499.500px;height:694px;background:#fff;border-radius:5px;box-shadow:0 2px 7px rgba(0,0,0,.22),0 0 1px rgba(0,0,0,.25);"></div>
<svg style="left:473.2px;top:155.4px" width="20.0" height="20.0" viewBox="0 0 20 20"><circle cx="8.300" cy="8.300" r="5.800" fill="none" stroke="#555" stroke-width="1.800"/><path d="M12.600 12.600l5.300 5.300" stroke="#555" stroke-width="2.200" stroke-linecap="butt"/></svg>
<div style="left:454.7px;top:199px;width:499.5px;height:2.2px;background:#2a3da8;"></div>
<svg style="left:921px;top:260.5px" width="12" height="16" viewBox="0 0 12 16"><path d="M3 2.200l6 5.800-6 5.800" fill="none" stroke="#555" stroke-width="1.800"/></svg>
<svg style="left:921px;top:299.7px" width="12" height="16" viewBox="0 0 12 16"><path d="M3 2.200l6 5.800-6 5.800" fill="none" stroke="#555" stroke-width="1.800"/></svg>
<svg style="left:921px;top:339.5px" width="12" height="16" viewBox="0 0 12 16"><path d="M3 2.200l6 5.800-6 5.800" fill="none" stroke="#555" stroke-width="1.800"/></svg>
<svg style="left:921px;top:379.3px" width="12" height="16" viewBox="0 0 12 16"><path d="M3 2.200l6 5.800-6 5.800" fill="none" stroke="#555" stroke-width="1.800"/></svg>
<svg style="left:921px;top:418.7px" width="12" height="16" viewBox="0 0 12 16"><path d="M3 2.200l6 5.800-6 5.800" fill="none" stroke="#555" stroke-width="1.800"/></svg>
<div style="left:454.7px;top:456px;width:499.5px;height:1px;background:#e6e6e6;"></div>
<svg style="left:921px;top:516.2px" width="12" height="16" viewBox="0 0 12 16"><path d="M3 2.200l6 5.800-6 5.800" fill="none" stroke="#555" stroke-width="1.800"/></svg>
<svg style="left:921px;top:555.5px" width="12" height="16" viewBox="0 0 12 16"><path d="M3 2.200l6 5.800-6 5.800" fill="none" stroke="#555" stroke-width="1.800"/></svg>
<div style="left:454.7px;top:593px;width:499.5px;height:1px;background:#e6e6e6;"></div>
<svg style="left:921px;top:653.3000000000001px" width="12" height="16" viewBox="0 0 12 16"><path d="M3 2.200l6 5.800-6 5.800" fill="none" stroke="#555" stroke-width="1.800"/></svg>
<svg style="left:921px;top:692.4000000000001px" width="12" height="16" viewBox="0 0 12 16"><path d="M3 2.200l6 5.800-6 5.800" fill="none" stroke="#555" stroke-width="1.800"/></svg>
<svg style="left:921px;top:732.2px" width="12" height="16" viewBox="0 0 12 16"><path d="M3 2.200l6 5.800-6 5.800" fill="none" stroke="#555" stroke-width="1.800"/></svg>
<div style="left:454.700px;top:770.800px;width:499.500px;height:57.800px;background:#fff;border-radius:0 0 5px 5px;box-shadow:0 -1px 3px rgba(0,0,0,.16);"></div>
<div style="left:467.4px;top:785.4px;width:75px;height:38.2px;border:1px solid #e8e8e8;border-radius:6px;background:#fff;"></div>
<div style="left:841.2px;top:784.6px;width:99px;height:39.4px;background:#7cb32a;border-radius:5px;"></div>
<span class="t" style="left:506.50px;top:158px;font-size:17px;color:#a8a8a8;letter-spacing:0.241px;">Search Filters</span>
<span class="t" style="left:468.00px;top:222px;font-size:17px;color:#222;letter-spacing:1.122px;-webkit-text-stroke:0.5px #222;">Assignment &amp; Attribution</span>
<span class="t" style="left:467.00px;top:261px;font-size:17px;color:#666;letter-spacing:0.523px;">User</span>
<span class="t" style="left:468.00px;top:300px;font-size:17px;color:#666;letter-spacing:0.439px;">Vehicle</span>
<span class="t" style="left:467.00px;top:340px;font-size:17px;color:#666;letter-spacing:0.230px;">Facility</span>
<span class="t" style="left:468.00px;top:380px;font-size:17px;color:#666;letter-spacing:0.568px;">Customer</span>
<span class="t" style="left:468.00px;top:419px;font-size:17px;color:#666;letter-spacing:0.568px;">Contract</span>
<span class="t" style="left:468.00px;top:479px;font-size:17px;color:#222;letter-spacing:0.989px;-webkit-text-stroke:0.5px #222;">Strategic Optimization</span>
<span class="t" style="left:468.00px;top:516px;font-size:17px;color:#666;letter-spacing:0.600px;">Strategic Optimization Name</span>
<span class="t" style="left:468.00px;top:556px;font-size:17px;color:#666;letter-spacing:0.424px;">Scenario Name</span>
<span class="t" style="left:467.00px;top:615px;font-size:17px;color:#222;letter-spacing:1.023px;-webkit-text-stroke:0.5px #222;">Route</span>
<span class="t" style="left:468.00px;top:654px;font-size:17px;color:#666;letter-spacing:0.261px;">Status</span>
<span class="t" style="left:467.00px;top:693px;font-size:17px;color:#666;letter-spacing:0.583px;">Planned Total Route Duration (h)</span>
<span class="t" style="left:467.00px;top:732px;font-size:17px;color:#666;letter-spacing:0.515px;">Planned Total Distance (mi)</span>
<span class="t" style="left:481.40px;top:797px;font-size:17px;color:#444;letter-spacing:0.478px;-webkit-text-stroke:0.6px #444;">Reset</span>
<span class="t" style="left:867.40px;top:797px;font-size:17px;color:#fff;letter-spacing:0.794px;-webkit-text-stroke:0.6px #fff;">Apply</span>
</div>
<div class="L">
<svg style="left:121.19999999999999px;top:-17.1px;overflow:visible" width="110" height="110" viewBox="-30 -30 110 110"><g fill="#c63a23" transform="translate(0,2.200)"><rect x="0" y="0" width="49.5" height="47.5" rx="6" ry="6"/><path d="M48.5 16.100H54.5V10.900L73.5 24.600L54.5 38.300V33.100H48.5Z"/></g><g fill="#f0472e"><rect x="0" y="0" width="49.5" height="47.5" rx="6" ry="6"/><path d="M48.5 16.100H54.5V10.900L73.5 24.600L54.5 38.300V33.100H48.5Z"/></g></svg>
<svg style="left:731.2px;top:-16.1px;overflow:visible" width="110" height="110" viewBox="-30 -30 110 110"><g fill="#c63a23" transform="translate(0,2.200)"><rect x="0" y="0" width="49.5" height="47.5" rx="6" ry="6"/><path d="M1 16.100H-5V10.900L-24 24.600L-5 38.300V33.100H1Z"/></g><g fill="#f0472e"><rect x="0" y="0" width="49.5" height="47.5" rx="6" ry="6"/><path d="M1 16.100H-5V10.900L-24 24.600L-5 38.300V33.100H1Z"/></g></svg>
<svg style="left:358.4px;top:60.2px;overflow:visible" width="110" height="110" viewBox="-30 -30 110 110"><g fill="#c63a23" transform="translate(0,2.200)"><rect x="0" y="0" width="49.5" height="47.5" rx="6" ry="6"/><path d="M48.5 16.100H54.5V10.900L73.5 24.600L54.5 38.300V33.100H48.5Z"/></g><g fill="#f0472e"><rect x="0" y="0" width="49.5" height="47.5" rx="6" ry="6"/><path d="M48.5 16.100H54.5V10.900L73.5 24.600L54.5 38.300V33.100H48.5Z"/></g></svg>
<svg style="left:455px;top:812.3px;overflow:visible" width="110" height="110" viewBox="-30 -30 110 110"><g fill="#c63a23" transform="translate(0,2.200)"><rect x="0" y="0" width="49.5" height="47.5" rx="6" ry="6"/><path d="M16 1V-7.500H11.150L25 -24L38.850 -7.500H34V1Z"/></g><g fill="#f0472e"><rect x="0" y="0" width="49.5" height="47.5" rx="6" ry="6"/><path d="M16 1V-7.500H11.150L25 -24L38.850 -7.500H34V1Z"/></g></svg>
<svg style="left:841px;top:812.3px;overflow:visible" width="110" height="110" viewBox="-30 -30 110 110"><g fill="#c63a23" transform="translate(0,2.200)"><rect x="0" y="0" width="49.5" height="47.5" rx="6" ry="6"/><path d="M16 1V-7.500H11.150L25 -24L38.850 -7.500H34V1Z"/></g><g fill="#f0472e"><rect x="0" y="0" width="49.5" height="47.5" rx="6" ry="6"/><path d="M16 1V-7.500H11.150L25 -24L38.850 -7.500H34V1Z"/></g></svg>
<span class="t" style="left:167.85px;top:25px;font-size:26px;color:#fff;font-weight:700;">1</span>
<span class="t" style="left:778.35px;top:26px;font-size:26px;color:#fff;font-weight:700;">2</span>
<span class="t" style="left:405.55px;top:102px;font-size:26px;color:#fff;font-weight:700;">3</span>
<span class="t" style="left:502.15px;top:854px;font-size:26px;color:#fff;font-weight:700;">5</span>
<span class="t" style="left:887.65px;top:854px;font-size:26px;color:#fff;font-weight:700;">4</span>
</div>
<div class="L">
</div>
</body></html>
